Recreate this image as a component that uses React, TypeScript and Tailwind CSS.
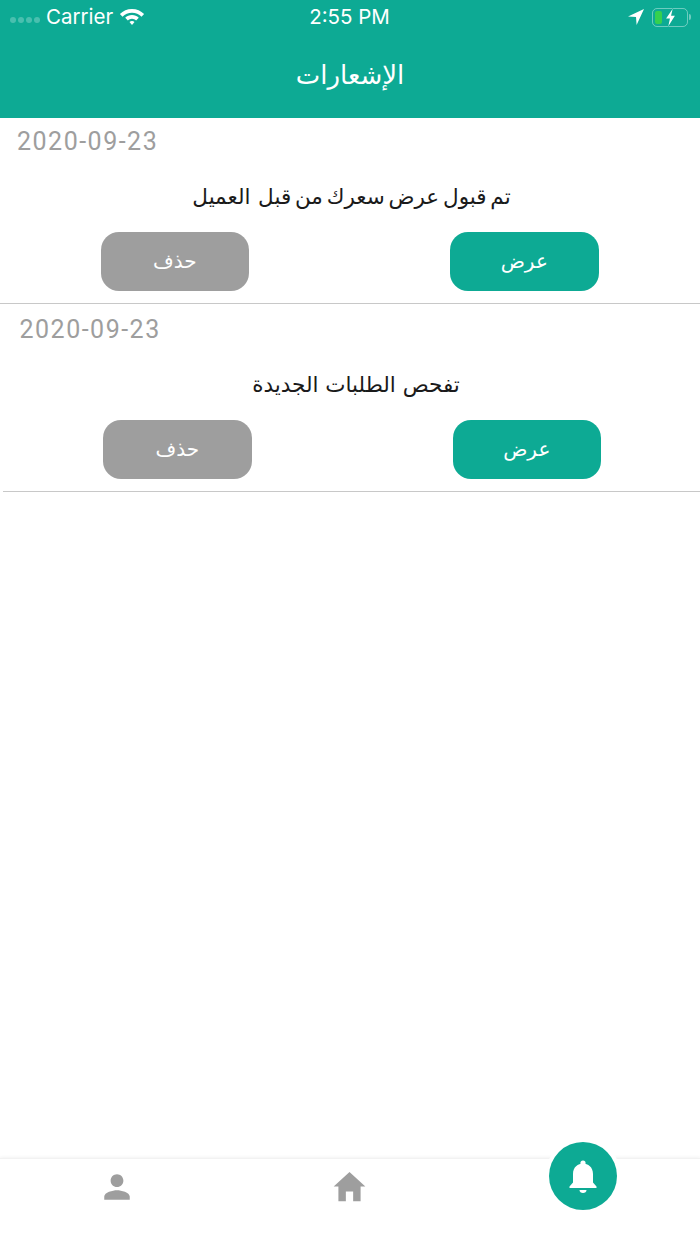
import React from 'react';
import { IoMdHome, IoMdPerson } from 'react-icons/io';

const ARABIC_FONT = "font-['DejaVu_Sans',sans-serif]";

const notifications = [
  { id: 1, date: '2020-09-23', text: 'تم قبول عرض سعرك من قبل  العميل', rowClass: 'h-[185px]', textClass: 'pl-[3px] [word-spacing:-3px]' },
  { id: 2, date: '2020-09-23', text: 'تفحص الطلبات الجديدة', rowClass: 'ml-[2.5px] h-[185px] pt-[2px]', textClass: 'pl-[7px]' },
];

const StatusBar: React.FC = () => (
  <div className="h-[34px] flex items-center justify-between pl-[10px] pr-[9px] text-white text-[20.5px] font-['Inter',sans-serif]">
    <div className="flex-1 flex items-center">
      <div className="flex gap-[2px] mt-[5px] mr-[6px]">
        {[0, 1, 2, 3].map((dot) => (
          <span key={dot} className="w-[6px] h-[6px] rounded-full bg-white/25" />
        ))}
      </div>
      <span>Carrier</span>
      <svg viewBox="0 0 26 20" className="w-[26px] h-[20px] ml-[6px]" fill="white">
        <path d="M13 2C8.300 2 4 3.900 .9 7l2.600 2.700C6 7.200 9.300 5.700 13 5.700s7 1.500 9.500 4L25.100 7C22 3.900 17.700 2 13 2z" />
        <path d="M13 8c-2.600 0-5 1-6.800 2.800l2.700 2.700C10 12.400 11.400 11.700 13 11.700s3 .7 4.100 1.800l2.700-2.700C18 9 15.600 8 13 8z" />
        <path d="M13 14c-1 0-1.900.4-2.500 1l2.500 3 2.500-3c-.6-.6-1.500-1-2.500-1z" />
      </svg>
    </div>
    <span className="pr-[2px]">2:55 PM</span>
    <div className="flex-1 flex items-center justify-end gap-[8px]">
      <svg viewBox="0 0 16 16" className="w-[16px] h-[16px]" fill="white">
        <path d="M16 0 0 7.500 8 8l.6 8z" />
      </svg>
      <div className="flex items-center">
        <div className="w-[36px] h-[19px] rounded-[5px] border border-white/40 p-[2px] relative">
          <div className="w-[7px] h-full rounded-[2px] bg-[#35d04f]" />
          <svg viewBox="0 0 10 16" className="absolute left-[12px] top-[-1px] w-[11px] h-[19px] overflow-visible" fill="white" stroke="#0daa94" strokeWidth="1" paintOrder="stroke">
            <path d="M7 0 1 9h3.500L3 16l6-9.500H5.500z" />
          </svg>
        </div>
        <span className="w-[2px] h-[6px] ml-[1px] rounded-r-full bg-white/40" />
      </div>
    </div>
  </div>
);

export default function App() {
  return (
    <div className="relative w-[700px] h-[1244px] flex flex-col bg-white overflow-hidden">
      <header className="h-[118px] bg-[#0daa94] shrink-0">
        <StatusBar />
        <h1 dir="rtl" className={`mt-[18px] text-center text-white text-[26px] leading-[46px] font-normal ${ARABIC_FONT}`}>
          الإشعارات
        </h1>
      </header>

      <main className="flex-1">
        {notifications.map((item) => (
          <div key={item.id} className={`w-[700px] box-content border-b border-[#c8c8c8] ${item.rowClass}`}>
            <p className="pl-[17px] pt-[8px] h-[44px] leading-[32px] text-[25px] tracking-[1.5px] text-[#9e9e9e] font-['Roboto',sans-serif]">
              {item.date}
            </p>
            <p dir="rtl" className={`h-[70px] leading-[70px] text-center text-[21.5px] text-[#1a1a1a] whitespace-pre ${ARABIC_FONT} ${item.textClass}`}>
              {item.text}
            </p>
            <div className="flex justify-between pl-[100.5px] pr-[101.5px]">
              <button className={`w-[148.5px] h-[59px] pb-[2px] rounded-[18px] bg-[#9e9e9e] text-white text-[20px] ${ARABIC_FONT}`}>
                حذف
              </button>
              <button className={`w-[148.5px] h-[59px] pb-[2px] rounded-[18px] bg-[#0daa94] text-white text-[20px] ${ARABIC_FONT}`}>
                عرض
              </button>
            </div>
          </div>
        ))}
      </main>

      <nav className="h-[86px] shrink-0 border-t border-[#f2f2f2] shadow-[0_-1px_3px_rgba(0,0,0,0.05)] grid grid-cols-3 text-[#9e9e9e]">
        <div className="h-[56px] flex items-center justify-center">
          <IoMdPerson className="w-[34px] h-[34px]" />
        </div>
        <div className="h-[54px] flex items-center justify-center">
          <IoMdHome className="w-[39px] h-[39px]" />
        </div>
      </nav>

      <div className="absolute left-[545px] top-[1138px] w-[76px] h-[76px] rounded-full bg-white flex items-center justify-center">
        <div className="w-[68px] h-[68px] rounded-full bg-[#0daa94] flex items-center justify-center">
          <svg viewBox="0 0 28 34" className="w-[28px] h-[34px] mt-[1px]" fill="white">
            <circle cx="14" cy="3" r="2.600" />
            <path d="M14 3.500c-5 0-10 3.500-10 10.500v8.500L.5 26.500V28h27v-1.500L24 22.500V14c0-7-5-10.500-10-10.500z" />
            <path d="M10.500 30h7c0 2-1.500 3-3.500 3s-3.500-1-3.500-3z" />
          </svg>
        </div>
      </div>
    </div>
  );
}
